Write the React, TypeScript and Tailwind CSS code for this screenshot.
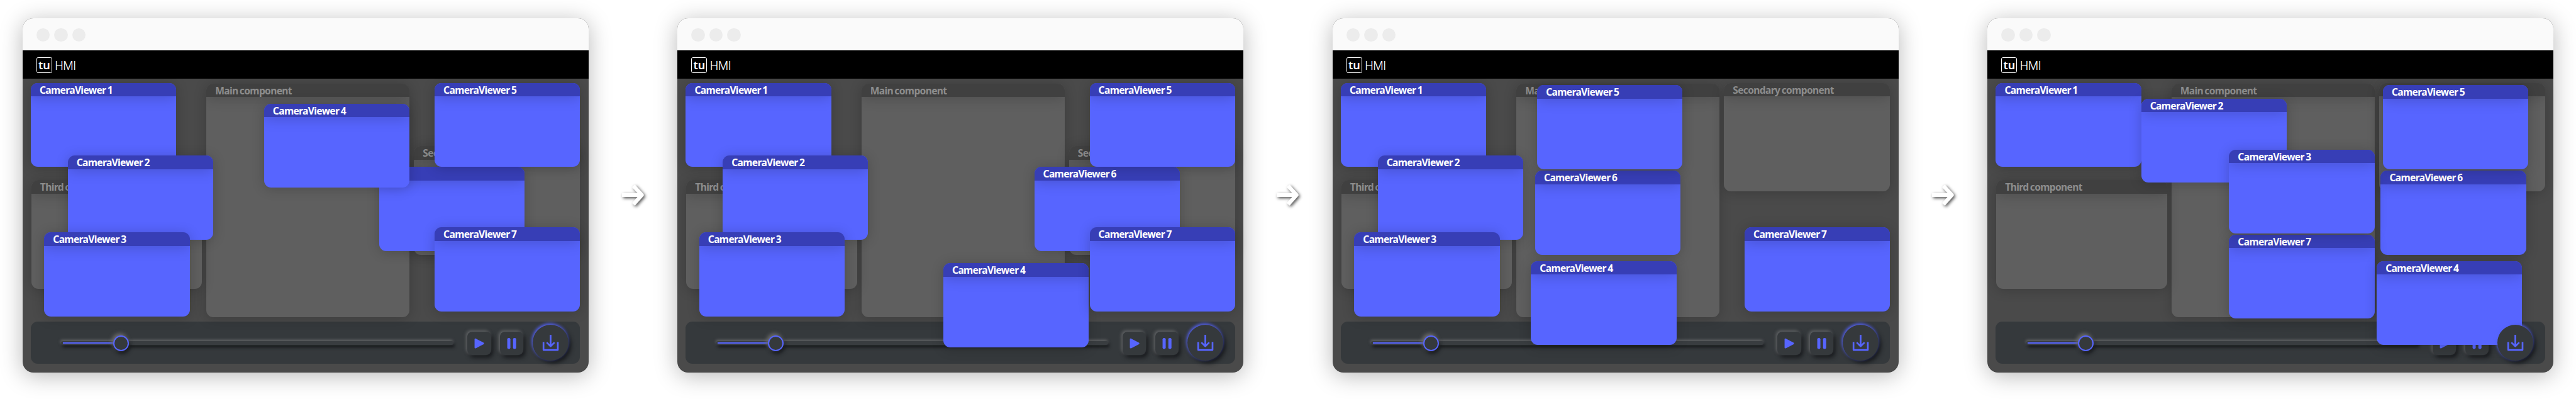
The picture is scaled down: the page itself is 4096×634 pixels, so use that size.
type Item = { id: string; title?: string; x: number; y: number; w: number; h: number; z: number; muted?: boolean };

const SCALE = 0.88945;

const camera = (n: number, x: number, y: number, z: number): Item => ({
  id: `camera-${n}`,
  title: `CameraViewer ${n}`,
  x,
  y,
  w: 260,
  h: 150,
  z,
});

const mainPanel: Item = { id: "main", title: "Main component", x: 329, y: 8, w: 363, h: 418, z: 1, muted: true };
const thirdPanel: Item = { id: "third", title: "Third component", x: 16, y: 181, w: 305, h: 194, z: 1, muted: true };
const secondaryPanel = (y: number, title?: string): Item => ({
  id: "secondary",
  title,
  x: 700,
  y,
  w: 297,
  h: 194,
  z: 1,
  muted: true,
});

const screens: Item[][] = [
  [
    mainPanel,
    thirdPanel,
    secondaryPanel(120, "Secondary component"),
    camera(1, 15, 7, 3),
    camera(2, 81, 137, 4),
    camera(3, 39, 274, 5),
    { id: "camera-6", x: 638, y: 157, w: 260, h: 150, z: 2 },
    camera(4, 432, 44, 6),
    camera(5, 737, 7, 6),
    camera(7, 737, 265, 7),
  ],
  [
    mainPanel,
    thirdPanel,
    secondaryPanel(120, "Secondary component"),
    camera(1, 15, 7, 3),
    camera(2, 81, 137, 4),
    camera(3, 39, 274, 5),
    camera(6, 638, 157, 2),
    camera(4, 475.5, 329, 6),
    camera(5, 737, 7, 6),
    camera(7, 737, 265, 7),
  ],
  [
    mainPanel,
    thirdPanel,
    secondaryPanel(7, "Secondary component"),
    camera(1, 15, 7, 3),
    camera(2, 81, 137, 4),
    camera(3, 39, 274, 5),
    camera(6, 362.5, 164, 2),
    camera(4, 355, 325, 6),
    camera(5, 366, 11, 6),
    camera(7, 737, 265, 7),
  ],
  [
    mainPanel,
    thirdPanel,
    secondaryPanel(7),
    camera(1, 15, 7, 3),
    camera(2, 275, 35.5, 4),
    camera(3, 432, 126, 5),
    camera(6, 703, 164, 2),
    camera(4, 696, 325, 6),
    camera(5, 707, 11, 6),
    camera(7, 432, 278, 4),
  ],
];

function Card({ item }: { item: Item }) {
  return (
    <section
      className={`absolute overflow-hidden rounded-[11px] shadow-[0_2px_20px_rgba(0,0,0,0.2)] ${
        item.muted ? "bg-[#5f5f5f]" : "bg-[#5765ff]"
      }`}
      style={{
        left: item.x * SCALE,
        top: item.y * SCALE,
        width: item.w * SCALE,
        height: item.h * SCALE,
        zIndex: item.z,
      }}
    >
      <h2
        className={`h-[21.4px] whitespace-nowrap pl-[14px] font-['Noto_Sans',sans-serif] text-[15.6px] leading-[22.5px] font-bold tracking-[-0.65px] [word-spacing:-1px] shadow-[0_2px_22px_rgba(0,0,0,0.2)] ${
          item.muted ? "bg-[#404040] text-[#8d8d8d]" : "bg-[#373eb6] text-white"
        }`}
      >
        {item.title}
      </h2>
    </section>
  );
}

const raised = "shadow-[-2px_-2px_5px_#636567,3px_4px_7px_#15171a]";

function Controls() {
  return (
    <div className="flex h-[66.7px] items-center rounded-[11px] bg-[#35393c] pl-[48.5px]">
      <div className="relative h-[6.5px] w-[623.5px] shrink-0 rounded-[3px] bg-[#393d40] shadow-[-1px_-2px_4px_#636567,2px_4px_5px_#17191b]">
        <div className="absolute top-[2px] left-[2.5px] h-[2.8px] w-[85px] bg-[#5765ff]" />
        <div className="absolute top-[-9px] left-[82.5px] size-[25px] rounded-full border-2 border-[#5765ff] bg-[#35393c] shadow-[-2px_-3px_6px_#707070,2px_4px_6px_#15171a]" />
      </div>
      <button className={`mt-[1px] ml-[22.6px] flex size-[37.4px] shrink-0 items-center justify-center rounded-[8px] bg-[#35393c] ${raised}`}>
        <svg viewBox="0 0 42 42" className="size-full" fill="#5765ff" stroke="#5765ff" strokeWidth="3" strokeLinejoin="round">
          <path d="M14.5 13.7V28.3L28.5 21Z" />
        </svg>
      </button>
      <button className={`mt-[1px] ml-[14.2px] flex size-[37.4px] shrink-0 items-center justify-center rounded-[8px] bg-[#35393c] ${raised}`}>
        <svg viewBox="0 0 42 42" className="size-full" fill="#5765ff">
          <rect x="13" y="11.3" width="5.6" height="19.6" rx="2.6" />
          <rect x="23.3" y="11.3" width="5.6" height="19.6" rx="2.6" />
        </svg>
      </button>
      <button className="relative z-20 mt-[-1px] ml-[14.3px] flex size-[57px] shrink-0 items-center justify-center rounded-full bg-[#35393c] shadow-[-1px_-2px_5px_#5765ff,4px_4px_7px_#15171a]">
        <svg viewBox="0 0 64 64" className="size-full" fill="none" stroke="#5765ff" strokeWidth="3" strokeLinejoin="round">
          <path d="M32 18V38.5" />
          <path d="M25 31.6L32 38.4L39 31.6" />
          <path d="M19.3 31V45H44.9V31" />
        </svg>
      </button>
    </div>
  );
}

function Window({ items }: { items: Item[] }) {
  return (
    <article className="flex h-[563px] w-[900px] shrink-0 flex-col rounded-[17px] bg-[#4a4a4a] shadow-[0_5px_36px_rgba(0,0,0,0.28)]">
      <div className="flex h-[51.6px] gap-[7.2px] rounded-t-[17px] bg-[#fafafa] pt-[16px] pl-[22.2px]">
        <span className="size-[21.3px] rounded-full bg-[#ececec]" />
        <span className="size-[21.3px] rounded-full bg-[#ececec]" />
        <span className="size-[21.3px] rounded-full bg-[#ececec]" />
      </div>
      <header className="flex h-[45.4px] bg-black pt-[11.4px] pl-[22.2px] font-['Noto_Sans',sans-serif] text-white">
        <span className="flex size-[25px] justify-center rounded-[2.5px] border border-white text-[18px] leading-[22px] font-semibold">
          tu
        </span>
        <span className="ml-[4.5px] font-['Inter',sans-serif] text-[18.3px] leading-[27px] font-[350] tracking-[-0.5px]">
          HMI
        </span>
      </header>
      <main className="relative flex flex-1 flex-col justify-end px-[13.3px] pb-[13.4px]">
        {items.map((item) => (
          <Card key={item.id} item={item} />
        ))}
        <Controls />
      </main>
    </article>
  );
}

function Arrow() {
  return (
    <div className="flex w-[141.5px] shrink-0 justify-center">
      <svg
        viewBox="0 0 40 38"
        className="h-[33.8px] w-[35.6px] overflow-visible drop-shadow-[2px_2px_2.5px_rgba(0,0,0,0.7)]"
        fill="none"
        stroke="#fff"
        strokeWidth="7"
      >
        <path d="M0 19H35" />
        <path d="M20.5 2.5L35.5 19L20.5 35.5" strokeLinejoin="round" />
      </svg>
    </div>
  );
}

export default function App() {
  return (
    <div className="flex h-[634px] w-[4096px] overflow-hidden bg-white pt-[28.5px] pl-[35.6px]">
      {screens.map((items, i) => (
        <div key={i} className="flex h-[563px] shrink-0 items-center">
          {i > 0 && <Arrow />}
          <Window items={items} />
        </div>
      ))}
    </div>
  );
}
